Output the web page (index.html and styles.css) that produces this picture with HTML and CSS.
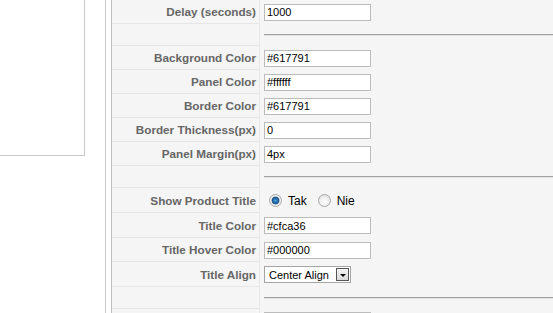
FILE: index.html
```html
<!DOCTYPE html>
<html lang="pl">
<head>
    <meta charset="UTF-8">
    <meta name="viewport" content="width=device-width, initial-scale=1.0">
    <title>Parametry modułu</title>
    <link rel="stylesheet" href="styles.css">
</head>
<body>
    <div class="page">
        <div class="side">
            <div class="side-box"></div>
        </div>

        <div class="panel">
            <div class="params">
                <div class="row">
                    <div class="key">Delay (seconds)</div>
                    <div class="value"><input type="text" value="1000"></div>
                </div>
                <div class="row spacer">
                    <div class="key"></div>
                    <div class="value"><hr></div>
                </div>
                <div class="row">
                    <div class="key">Background Color</div>
                    <div class="value"><input type="text" value="#617791"></div>
                </div>
                <div class="row">
                    <div class="key">Panel Color</div>
                    <div class="value"><input type="text" value="#ffffff"></div>
                </div>
                <div class="row">
                    <div class="key">Border Color</div>
                    <div class="value"><input type="text" value="#617791"></div>
                </div>
                <div class="row">
                    <div class="key">Border Thickness(px)</div>
                    <div class="value"><input type="text" value="0"></div>
                </div>
                <div class="row">
                    <div class="key">Panel Margin(px)</div>
                    <div class="value"><input type="text" value="4px"></div>
                </div>
                <div class="row spacer">
                    <div class="key"></div>
                    <div class="value"><hr></div>
                </div>
                <div class="row tall">
                    <div class="key">Show Product Title</div>
                    <div class="value">
                        <label class="radio"><input type="radio" name="showtitle" checked> Tak</label>
                        <label class="radio"><input type="radio" name="showtitle"> Nie</label>
                    </div>
                </div>
                <div class="row tall">
                    <div class="key">Title Color</div>
                    <div class="value"><input type="text" value="#cfca36"></div>
                </div>
                <div class="row">
                    <div class="key">Title Hover Color</div>
                    <div class="value"><input type="text" value="#000000"></div>
                </div>
                <div class="row tall">
                    <div class="key">Title Align</div>
                    <div class="value">
                        <span class="select">
                            <select>
                                <option>Center Align</option>
                                <option>Left Align</option>
                                <option>Right Align</option>
                            </select>
                            <span class="select-btn"></span>
                        </span>
                    </div>
                </div>
                <div class="row spacer">
                    <div class="key"></div>
                    <div class="value"><hr></div>
                </div>
                <div class="row last">
                    <div class="key"></div>
                    <div class="value"><input type="text" value=""></div>
                </div>
            </div>
        </div>
    </div>
</body>
</html>
```

FILE: styles.css
```css
body {
    margin: 0;
    background: #fff;
    font-family: "Liberation Sans", Arial, sans-serif;
    font-size: 11px;
    color: #000;
    overflow: hidden;
}
.page {
    display: flex;
    align-items: flex-start;
    height: 313px;
}
.side {
    width: 85px;
    margin-right: 20px;
}
.side-box {
    height: 155px;
    border-right: 1px solid #c8c8c8;
    border-bottom: 1px solid #c8c8c8;
    background: #fff;
}
.panel {
    flex: 1;
    height: 100%;
    border-left: 1px solid #cccccc;
    padding-left: 5px;
}
.params {
    height: 100%;
    border-left: 1px solid #c0c0c0;
    background: #f5f5f5;
}
.row {
    display: grid;
    grid-template-columns: 148px 1fr;
    height: 24px;
}
.row.spacer {
    height: 22px;
}
.row.tall {
    height: 25px;
}
.row.last .value {
    align-items: flex-start;
    padding-top: 3px;
}
.key {
    box-sizing: border-box;
    display: flex;
    align-items: center;
    justify-content: flex-end;
    padding-right: 3px;
    border-right: 1px solid #e6e6e6;
    border-bottom: 1px solid #e6e6e6;
    background: #f5f5f5;
    color: #666;
    font-size: 11.7px;
    font-weight: bold;
    white-space: nowrap;
}
.value {
    display: flex;
    align-items: center;
    padding-left: 4px;
}
.value input[type="text"] {
    box-sizing: border-box;
    width: 107px;
    height: 17px;
    margin: 0;
    padding: 0 2px;
    border: 1px solid #bcbcbc;
    background: #fff;
    font-family: "Liberation Sans", Arial, sans-serif;
    font-size: 11px;
    color: #000;
    outline: none;
}
hr {
    flex: 1;
    height: 0;
    margin: 0;
    border: none;
    border-top: 1px solid #a0a0a0;
    border-bottom: 1px solid #e2e2e2;
}
.radio {
    display: inline-flex;
    align-items: center;
    margin-left: 5px;
    margin-right: 6px;
    font-size: 12px;
    color: #000;
}
.radio input {
    appearance: none;
    -webkit-appearance: none;
    box-sizing: border-box;
    width: 13px;
    height: 13px;
    margin: 0 6px 0 0;
    border: 1px solid #a8a8a8;
    border-radius: 50%;
    background: radial-gradient(circle at 50% 60%, #ffffff 0%, #ececec 55%, #cfcfcf 100%);
}
.radio input:checked {
    background: radial-gradient(circle at 50% 50%, #5aa8e0 0, #2a7cc0 1.5px, #1b5486 3.5px, #dcdcdc 4.2px, #ffffff 6px);
}
.select {
    display: inline-flex;
    align-items: center;
    box-sizing: border-box;
    height: 17px;
    border: 1px solid #a5a5a5;
    background: #fff;
    padding-right: 1px;
}
.select select {
    appearance: none;
    -webkit-appearance: none;
    border: none;
    background: transparent;
    padding: 0 4px;
    margin: 0;
    width: 71px;
    font-family: "Liberation Sans", Arial, sans-serif;
    font-size: 11px;
    color: #000;
    outline: none;
}
.select-btn {
    box-sizing: border-box;
    width: 13px;
    height: 13px;
    border: 1px solid #555;
    background: linear-gradient(#f4f4f4, #d8d8d8);
    display: flex;
    align-items: center;
    justify-content: center;
}
.select-btn::after {
    content: "";
    border-left: 3px solid transparent;
    border-right: 3px solid transparent;
    border-top: 3px solid #000;
    margin-top: 2px;
}
```
